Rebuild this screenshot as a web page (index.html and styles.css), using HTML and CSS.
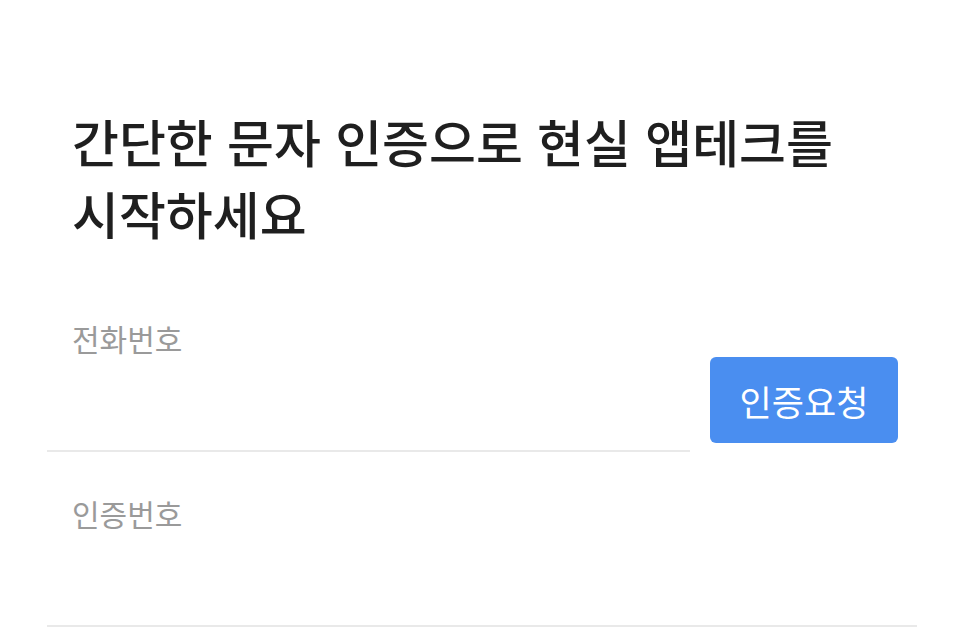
FILE: index.html
```html
<!DOCTYPE html>
<html lang="ko">
<head>
  <meta charset="UTF-8" />
  <meta name="viewport" content="width=device-width, initial-scale=1.0"/>
  <title>문자 인증</title>
  <link rel="stylesheet" href="styles.css">
</head>
<body>

  <div class="page">
    <h1 class="title">간단한 문자 인증으로 현실 앱테크를<br>시작하세요</h1>

    <!-- PHONE -->
    <div class="row">
      <div class="field">
        <label for="phone">전화번호</label>
        <input type="tel" id="phone" />
      </div>
      <button class="req-btn">인증요청</button>
    </div>

    <!-- CODE -->
    <div class="row">
      <div class="field">
        <label for="code">인증번호</label>
        <input type="text" id="code" />
      </div>
    </div>
  </div>

</body>
</html>
```

FILE: styles.css
```css
body { margin: 0; background: #fff; font-family: "Noto Sans CJK KR", "Noto Sans", sans-serif; }
.page { padding: 105px 49px 0 47px; }
.title { margin: 0 0 69px; padding-left: 25px; font-size: 51px; line-height: 72px; font-weight: 500; color: #1f1f1f; }
.row { display: flex; align-items: flex-end; gap: 20px; margin-bottom: 41px; }
.field { flex: 1; display: flex; flex-direction: column; border-bottom: 2px solid #e9e9e9; }
.field label { padding-left: 25px; font-size: 30px; line-height: 40px; color: #9a9a9a; }
.field input { height: 92px; border: none; outline: none; padding: 0 25px; font-size: 28px; background: transparent; font-family: inherit; }
.req-btn { width: 188px; height: 86px; margin: 0 19px 9px 0; background: #4a8ef0; color: #fff; border: none; border-radius: 6px; font-size: 35px; font-family: inherit; cursor: pointer; }
```
